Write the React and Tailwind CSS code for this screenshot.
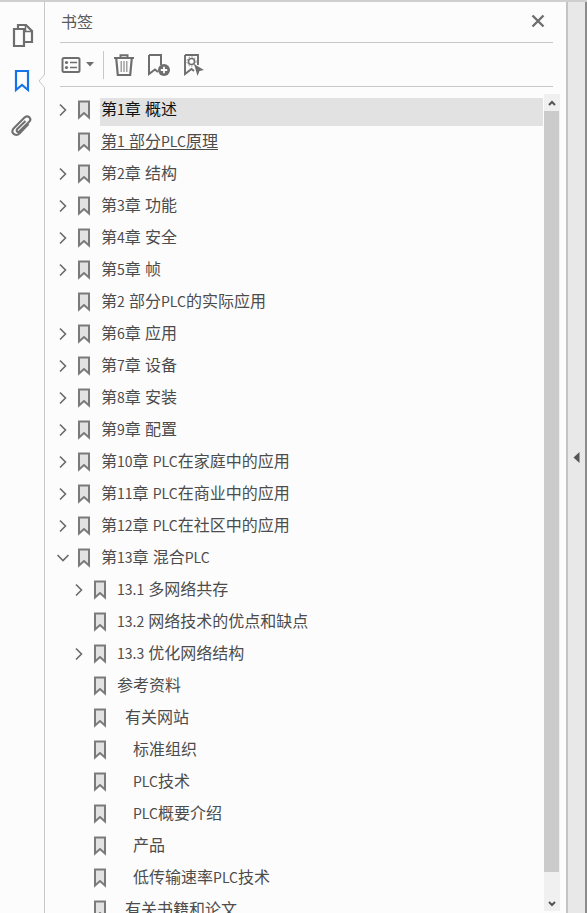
import React from "react";

const Mark = () => (
  <svg width="14" height="20" viewBox="0 0 14 20" className="shrink-0">
    <path d="M2 1.5H12V17.5L7 13L2 17.5Z" fill="#e2e2e2" stroke="#7a7a7a" strokeWidth="2" strokeLinejoin="miter" />
  </svg>
);

const Right = () => (
  <svg width="10" height="14" viewBox="0 0 10 14" className="shrink-0">
    <path d="M2 1.5L7.5 7L2 12.5" fill="none" stroke="#6a6a6a" strokeWidth="1.6" />
  </svg>
);
const Down = () => (
  <svg width="14" height="10" viewBox="0 0 14 10" className="shrink-0">
    <path d="M1.5 2L7 7.5L12.5 2" fill="none" stroke="#6a6a6a" strokeWidth="1.6" />
  </svg>
);

const rows = [
  { t: "第1章 概述", c: "r", sel: true },
  { t: "第1 部分PLC原理", u: true },
  { t: "第2章 结构", c: "r" },
  { t: "第3章 功能", c: "r" },
  { t: "第4章 安全", c: "r" },
  { t: "第5章 帧", c: "r" },
  { t: "第2 部分PLC的实际应用" },
  { t: "第6章 应用", c: "r" },
  { t: "第7章 设备", c: "r" },
  { t: "第8章 安装", c: "r" },
  { t: "第9章 配置", c: "r" },
  { t: "第10章 PLC在家庭中的应用", c: "r" },
  { t: "第11章 PLC在商业中的应用", c: "r" },
  { t: "第12章 PLC在社区中的应用", c: "r" },
  { t: "第13章 混合PLC", c: "d" },
  { t: "13.1 多网络共存", c: "r", l: 1 },
  { t: "13.2 网络技术的优点和缺点", l: 1 },
  { t: "13.3 优化网络结构", c: "r", l: 1 },
  { t: "参考资料", l: 1 },
  { t: "有关网站", l: 1, x: 1 },
  { t: "标准组织", l: 1, x: 2 },
  { t: "PLC技术", l: 1, x: 2 },
  { t: "PLC概要介绍", l: 1, x: 2 },
  { t: "产品", l: 1, x: 2 },
  { t: "低传输速率PLC技术", l: 1, x: 2 },
  { t: "有关书籍和论文", l: 1, x: 1 },
];

function Mixed({ t }) {
  return t.split(/([\u4e00-\u9fff]+)/).filter(Boolean).map((s, i) =>
    /[\u4e00-\u9fff]/.test(s) ? (
      <span key={i} className="text-[16px]">{s}</span>
    ) : (
      <span key={i} className="text-[14px] [word-spacing:1px]">{s}</span>
    )
  );
}

function Row({ r }) {
  return (
    <div className={"flex h-8 shrink-0 items-center " + (r.l ? "pl-[27px]" : "pl-[11px]")}>
      <div className="flex w-[14px] shrink-0 items-center justify-center">
        {r.c === "r" && <Right />}
        {r.c === "d" && <Down />}
      </div>
      <div className="ml-[7px] flex w-[14px] shrink-0 justify-center"><Mark /></div>
      <div className={"ml-[9px] mr-px flex h-[28px] flex-1 items-center self-end pb-[9px] " + (r.sel ? "bg-[#e2e2e2] " : "") + (r.x === 1 ? "pl-[9px]" : r.x === 2 ? "pl-[17px]" : "pl-[1px]")}>
        <span className={"whitespace-pre leading-none " + (r.sel ? "text-[#111111]" : "text-[#4c4c4c]") + (r.u ? " underline underline-offset-2" : "")}><Mixed t={r.t} /></span>
      </div>
    </div>
  );
}

export default function App() {
  return (
    <div className="flex h-[913px] w-[587px] overflow-hidden border-t-2 border-[#cfcfcf] bg-[#fcfcfc] font-['Noto_Sans_CJK_SC','Noto_Sans',sans-serif]">
      <aside className="relative flex w-[45px] shrink-0 flex-col items-center border-r border-[#c8c8c8] bg-[#fcfcfc] pt-[20px]">
        <svg width="24" height="26" viewBox="0 0 24 26" className="-ml-[1px]">
          <path d="M8 6V3H16L22 9V20H15" fill="none" stroke="#6e6e6e" strokeWidth="2.2" />
          <path d="M15.5 3V9.5H22" fill="none" stroke="#6e6e6e" strokeWidth="1.5" />
          <path d="M4 7H14V24H4Z" fill="none" stroke="#6e6e6e" strokeWidth="2.2" />
        </svg>
        <svg width="16" height="24" viewBox="0 0 16 24" className="mt-[21px] -ml-[1px]">
          <path d="M2 2H14V21L8 16L2 21Z" fill="none" stroke="#1473e6" strokeWidth="2.2" />
        </svg>
        <svg width="24" height="26" viewBox="0 0 24 26" className="mt-[20px]">
          <path d="M18.5 11L9.5 20.5C7.5 22.5 4.8 22.2 3.5 20.8C2 19.2 2.2 16.8 4 15L14.5 4.5C16 3 18 3 19.3 4.3C20.6 5.6 20.5 7.5 19.2 8.8L9.5 18.3C8.7 19 7.7 19 7.1 18.4C6.5 17.8 6.6 16.8 7.3 16.1L15.5 8" fill="none" stroke="#707070" strokeWidth="2.1" />
        </svg>
        <div className="absolute right-[-1px] top-[72px] h-[14px] w-[7px]">
          <svg width="7" height="14" viewBox="0 0 7 14">
            <path d="M7 0L1 7L7 14" fill="#fcfcfc" stroke="#c8c8c8" strokeWidth="1" />
          </svg>
        </div>
      </aside>

      <main className="flex min-w-0 flex-1 flex-col">
        <header className="ml-[15px] mr-[13px] flex h-[41px] shrink-0 items-center justify-between border-b border-[#c8c8c8] pb-[3px] pl-[1px] pr-[8px]">
          <span className="text-[16px] leading-none text-[#5a5a5a]">书签</span>
          <svg width="14" height="14" viewBox="0 0 14 14">
            <path d="M1.5 1.5L12.5 12.5M12.5 1.5L1.5 12.5" stroke="#6e6e6e" strokeWidth="2.4" />
          </svg>
        </header>
        <div className="ml-[15px] mr-[13px] flex h-[44px] shrink-0 items-center border-b border-[#c8c8c8] pl-[1px]">
          <svg width="20" height="18" viewBox="0 0 20 18">
            <rect x="1.5" y="2" width="17" height="14" rx="1.5" fill="none" stroke="#6e6e6e" strokeWidth="2" />
            <circle cx="5.5" cy="6.5" r="1.6" fill="#6e6e6e" />
            <circle cx="5.5" cy="11.5" r="1.6" fill="#6e6e6e" />
            <path d="M9 6.5H16M9 11.5H16" stroke="#6e6e6e" strokeWidth="1.7" />
          </svg>
          <svg width="8" height="5" viewBox="0 0 8 5" className="ml-[5px]"><path d="M0 0H8L4 4.5Z" fill="#6e6e6e" /></svg>
          <div className="ml-[9px] h-[28px] w-px bg-[#c8c8c8]" />
          <svg width="20" height="22" viewBox="0 0 20 22" className="ml-[10px]">
            <path d="M0 4H20M6.5 4V1.2H13.5V4" fill="none" stroke="#6e6e6e" strokeWidth="2" />
            <path d="M2.2 4L3.8 21H16.2L17.8 4" fill="none" stroke="#6e6e6e" strokeWidth="2.2" />
            <path d="M7.2 7V18M10 7V18M12.8 7V18" stroke="#8a8a8a" strokeWidth="1.2" />
          </svg>
          <svg width="24" height="24" viewBox="0 0 24 24" className="ml-[13px]">
            <path d="M2 2H14V12M2 2V21L8 16.5L11 19" fill="none" stroke="#6e6e6e" strokeWidth="2" />
            <circle cx="17" cy="17" r="6" fill="#6e6e6e" />
            <path d="M13.8 17H20.2M17 13.8V20.2" stroke="#fff" strokeWidth="1.8" />
          </svg>
          <svg width="22" height="24" viewBox="0 0 22 24" className="ml-[12px]">
            <path d="M2 2H15V12M2 2V21L8.5 16L11 18" fill="none" stroke="#6e6e6e" strokeWidth="1.9" />
            <circle cx="8.5" cy="8.5" r="3" fill="none" stroke="#6e6e6e" strokeWidth="1.5" />
            <circle cx="8.5" cy="8.5" r="4.6" fill="none" stroke="#8a8a8a" strokeWidth="1" strokeDasharray="1.5 1.5" />
            <path d="M11 11L21 17L16.5 18L14.5 23Z" fill="#6e6e6e" />
          </svg>
        </div>
        <div className="flex min-h-0 flex-1 pt-[7px]">
          <div className="flex min-w-0 flex-1 flex-col overflow-hidden">
            {rows.map((r) => <Row key={r.t} r={r} />)}
          </div>
          <div className="mb-[2px] flex w-[16px] shrink-0 flex-col bg-[#f0f0f0]">
            <div className="flex h-[17px] shrink-0 items-center justify-center pr-px">
              <svg width="8" height="6" viewBox="0 0 8 6"><path d="M1 5L4 2L7 5" fill="none" stroke="#555" strokeWidth="2" /></svg>
            </div>
            <div className="h-[761px] w-[15px] bg-[#cbcbcb]" />
            <div className="flex flex-1 items-end justify-center pb-[4px] pr-px">
              <svg width="8" height="6" viewBox="0 0 8 6"><path d="M1 1L4 4L7 1" fill="none" stroke="#555" strokeWidth="2" /></svg>
            </div>
          </div>
          <div className="w-[6px] shrink-0" />
        </div>
      </main>

      <div className="flex w-[21px] shrink-0 flex-col items-center justify-center border-x-2 border-l-[#c4c4c4] border-r-[#8c8c8c] bg-[#e8e8e8]">
        <svg width="7" height="11" viewBox="0 0 7 11"><path d="M6.5 0V11L0.5 5.5Z" fill="#555" /></svg>
      </div>
    </div>
  );
}
